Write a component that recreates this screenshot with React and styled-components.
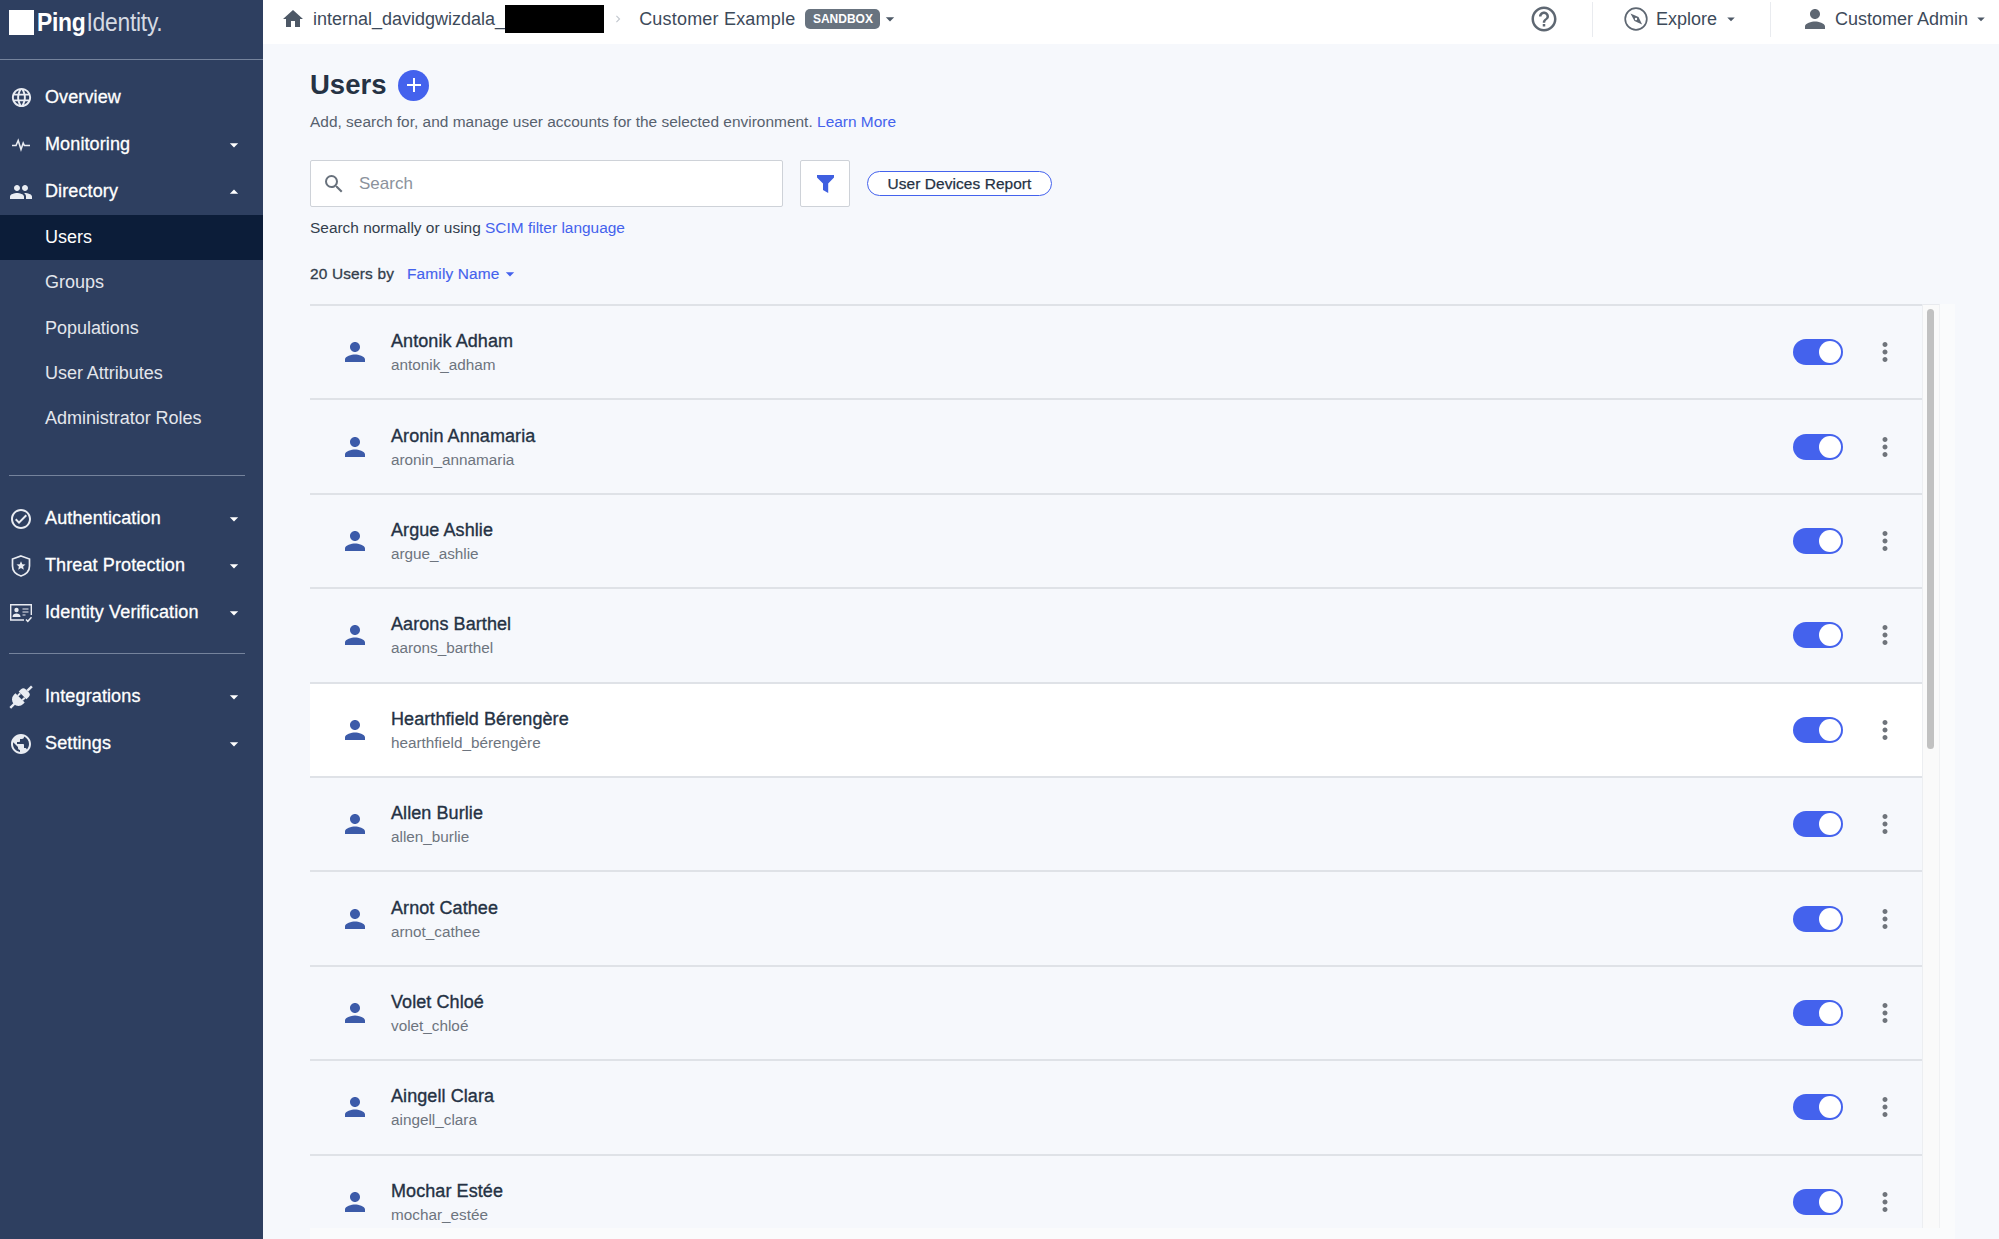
import React from 'react';
import styled, { createGlobalStyle } from 'styled-components';
import {
  MdHome, MdPerson, MdSearch, MdPeople, MdLanguage, MdPublic, MdOutlineCheckCircle,
  MdArrowDropDown, MdArrowDropUp, MdMoreVert, MdHelpOutline, MdChevronRight, MdAdd,
} from 'react-icons/md';

const GlobalStyle = createGlobalStyle`
  html, body {
    margin: 0;
    height: 100%;
    overflow: hidden;
    background: #f6f8fc;
    font-family: "Liberation Sans", Arial, sans-serif;
  }
  #root {
    height: 100%;
  }
`;

const Shell = styled.div`
  display: flex;
  height: 1239px;
  overflow: hidden;
`;

const Sidebar = styled.aside`
  width: 263px;
  flex-shrink: 0;
  background: #2e3f60;
  color: #fff;
`;

const LogoBar = styled.div`
  height: 60px;
  box-sizing: border-box;
  padding: 10px 0 0 9px;
  border-bottom: 1px solid #75839c;
  display: flex;
  align-items: flex-start;
`;

const LogoSquare = styled.div`
  width: 25px;
  height: 25px;
  background: #fff;
  margin-right: 3px;
`;

const LogoText = styled.div`
  font-size: 26px;
  line-height: 25px;
  letter-spacing: -0.3px;
  color: #d5dae3;
  white-space: nowrap;
  transform: scaleX(0.88);
  transform-origin: left center;

  b {
    color: #fff;
    margin-right: 1px;
  }
`;

const Nav = styled.nav`
  padding-top: 14px;
`;

const NavItem = styled.div`
  height: 47px;
  display: flex;
  align-items: center;
  padding: 0 19px 0 9px;
  font-size: 18px;
  letter-spacing: 0.12px;
  -webkit-text-stroke: 0.3px #fff;
  color: #fff;
`;

const NavIcon = styled.span`
  width: 24px;
  height: 24px;
  margin-right: 12px;
  display: flex;
  align-items: center;
  justify-content: center;
  color: #e9ecf2;
`;

const NavLabel = styled.span`
  flex: 1;
`;

const SubItem = styled.div`
  height: 45.25px;
  display: flex;
  align-items: center;
  padding-left: 45px;
  font-size: 18px;
  letter-spacing: -0.03px;
  color: ${(p) => (p.$active ? '#fff' : '#e3e6ec')};
  background: ${(p) => (p.$active ? '#0c1d39' : 'transparent')};
`;

const NavDivider = styled.hr`
  border: 0;
  height: 1px;
  background: #75839c;
  margin: ${(p) => p.$margin};
  width: 236px;
`;

const Main = styled.div`
  flex: 1;
  min-width: 0;
  display: flex;
  flex-direction: column;
`;

const TopBar = styled.header`
  height: 44px;
  box-sizing: border-box;
  padding-bottom: 6px;
  flex-shrink: 0;
  background: #fff;
  display: flex;
  align-items: center;
  justify-content: space-between;
  font-size: 18px;
  color: #3d4a5a;
`;

const Crumbs = styled.div`
  display: flex;
  align-items: center;
  padding-left: 18px;
`;

const HomeIcon = styled(MdHome)`
  margin-right: 8px;
  color: #4d5866;
`;

const Redacted = styled.span`
  width: 99px;
  height: 28px;
  background: #000;
`;

const CrumbArrow = styled(MdChevronRight)`
  color: #c3c8cf;
  margin: 0 14px 0 7px;
`;

const EnvName = styled.span`
  letter-spacing: 0.2px;
`;

const Badge = styled.span`
  margin-left: 10px;
  height: 20px;
  width: 75px;
  border-radius: 5px;
  background: #68737f;
  color: #fff;
  font-size: 12px;
  font-weight: bold;
  display: flex;
  align-items: center;
  justify-content: center;
`;

const TopActions = styled.div`
  display: flex;
  align-items: center;
`;

const TopSection = styled.div`
  height: 35px;
  display: flex;
  align-items: center;
  padding: ${(p) => p.$padding};
  border-left: ${(p) => (p.$divided ? '1px solid #e9ebef' : '0')};
  color: #5e6772;
`;

const TopText = styled.span`
  color: #3d4a5a;
  margin-left: ${(p) => p.$gap}px;
`;

const TopCaret = styled(MdArrowDropDown)`
  color: #4d5866;
  margin-left: ${(p) => p.$gap}px;
`;

const Content = styled.div`
  flex: 1;
  min-height: 0;
  padding: 25px 44px 0 47px;
  display: flex;
  flex-direction: column;
`;

const TitleRow = styled.div`
  display: flex;
  align-items: center;
  height: 32px;
`;

const Title = styled.h1`
  margin: 0;
  font-size: 27.5px;
  font-weight: bold;
  color: #253244;
`;

const AddButton = styled.span`
  width: 31px;
  height: 31px;
  margin-left: 12px;
  border-radius: 50%;
  background: #4462ed;
  color: #fff;
  display: flex;
  align-items: center;
  justify-content: center;
`;

const Description = styled.p`
  margin: 12px 0 0;
  height: 18px;
  line-height: 18px;
  font-size: 15.45px;
  letter-spacing: 0.01px;
  color: #57616e;
`;

const TextLink = styled.a`
  color: #4462ed;
`;

const SearchRow = styled.div`
  display: flex;
  align-items: center;
  margin-top: 29px;
`;

const SearchBox = styled.div`
  width: 473px;
  height: 47px;
  box-sizing: border-box;
  border: 1px solid #ced2d8;
  border-radius: 2px;
  background: #fff;
  display: flex;
  align-items: center;
  padding-left: 11px;
  font-size: 17px;
  color: #8b929c;
`;

const SearchIcon = styled(MdSearch)`
  margin-right: 13px;
  color: #68717c;
`;

const FilterButton = styled.div`
  width: 50px;
  height: 47px;
  box-sizing: border-box;
  margin-left: 17px;
  border: 1px solid #ced2d8;
  border-radius: 2px;
  background: #fff;
  display: flex;
  align-items: center;
  justify-content: center;
  color: #3f5fe0;
`;

const PillButton = styled.div`
  width: 185px;
  height: 25px;
  box-sizing: border-box;
  margin-left: 17px;
  border: 1.5px solid #4462ed;
  border-radius: 13px;
  background: #fff;
  display: flex;
  align-items: center;
  justify-content: center;
  font-size: 15.45px;
  letter-spacing: 0.08px;
  -webkit-text-stroke: 0.25px #253244;
  color: #253244;
`;

const Hint = styled.div`
  margin-top: 12px;
  height: 18px;
  line-height: 18px;
  font-size: 15.45px;
  color: #333e4c;
`;

const CountRow = styled.div`
  margin-top: 28px;
  height: 18px;
  display: flex;
  align-items: center;
  font-size: 15.45px;
  letter-spacing: 0.15px;
  -webkit-text-stroke: 0.3px #333e4c;
  color: #333e4c;
`;

const SortLink = styled.span`
  margin-left: 13px;
  display: flex;
  align-items: center;
  color: #4462ed;
  -webkit-text-stroke: 0.15px #4462ed;
`;

const ListFrame = styled.div`
  margin-top: 21px;
  width: 1645px;
  flex: 1;
  min-height: 0;
  box-sizing: border-box;
  padding: 0 15px 11px 0;
  background: #fafbfc;
  display: flex;
`;

const UserList = styled.div`
  flex: 1;
  min-width: 0;
  overflow: hidden;
  background: #f6f8fc;
  border-top: 2px solid #dfe2e7;
`;

const ScrollTrack = styled.div`
  width: 18px;
  flex-shrink: 0;
  box-sizing: border-box;
  padding: 4px 5px 0 4px;
  background: #fafafa;
  border-top: 1px solid #e8eaee;
  border-left: 1px solid #eceef1;
  border-right: 1px solid #f0f1f3;
`;

const ScrollThumb = styled.div`
  height: 440px;
  border-radius: 5px;
  background: #c1c1c1;
`;

const Row = styled.div`
  height: 94.4px;
  box-sizing: border-box;
  display: flex;
  align-items: center;
  padding: 0 22px 0 30px;
  border-bottom: 2px solid #dfe2e7;
  background: ${(p) => (p.$highlight ? '#fff' : 'transparent')};
`;

const UserIcon = styled(MdPerson)`
  color: #3c5ba9;
  flex-shrink: 0;
`;

const UserText = styled.div`
  flex: 1;
  margin-left: 21px;
`;

const UserName = styled.div`
  font-size: 18px;
  line-height: 22px;
  letter-spacing: 0.08px;
  -webkit-text-stroke: 0.35px #253244;
  color: #253244;
`;

const UserLogin = styled.div`
  margin-top: 4px;
  font-size: 15.3px;
  line-height: 18px;
  color: #6d747e;
`;

const Toggle = styled.span`
  width: 50px;
  height: 26px;
  box-sizing: border-box;
  border-radius: 13px;
  background: #4462ed;
  padding: 2px;
  display: flex;
  justify-content: flex-end;
  margin-right: 27px;

  &::after {
    content: '';
    width: 22px;
    height: 22px;
    border-radius: 50%;
    background: #fff;
  }
`;

const Kebab = styled(MdMoreVert)`
  color: #6f747b;
`;

function PulseIcon() {
  return (
    <svg width="20" height="20" viewBox="0 0 20 20" fill="none" stroke="currentColor" strokeWidth="1.6">
      <path d="M1 10.5h4l2.2-5 2.8 9 2.2-6.5 1.2 2.5H19" />
    </svg>
  );
}

function ShieldIcon() {
  return (
    <svg width="22" height="24" viewBox="0 0 22 24" fill="none" stroke="currentColor" strokeWidth="1.7">
      <path d="M11 2l8.5 3v7c0 4.8-3.6 8.4-8.5 10-4.9-1.6-8.5-5.2-8.5-10V5z" />
      <path fill="currentColor" stroke="none" d="M11 7.2l1.3 3 3.2.3-2.4 2.1.7 3.2-2.8-1.7-2.8 1.7.7-3.2-2.4-2.1 3.2-.3z" />
    </svg>
  );
}

function IdCardIcon() {
  return (
    <svg width="24" height="20" viewBox="0 0 24 20" fill="none" stroke="currentColor" strokeWidth="1.4">
      <path d="M15 17H1.7V1.7h20.6V12" />
      <circle cx="7.5" cy="7" r="2.2" fill="currentColor" stroke="none" />
      <path fill="currentColor" stroke="none" d="M3.5 14c0-2.4 2-3.4 4-3.4s4 1 4 3.4z" />
      <path d="M13.5 6h6M13.5 9h6M13.5 12h3" strokeWidth="1.2" />
      <path d="M17 16.5l1.8 1.8 3.7-4" strokeWidth="1.5" />
    </svg>
  );
}

function PlugIcon() {
  return (
    <svg width="24" height="24" viewBox="0 0 22 22" fill="currentColor">
      <g transform="rotate(45 11 11)">
        <rect x="10" y="-3" width="2.2" height="6" />
        <path d="M6 9V6a3 3 0 0 1 3-3h4a3 3 0 0 1 3 3v3z" />
        <rect x="7.2" y="9" width="1.8" height="3.4" />
        <rect x="13" y="9" width="1.8" height="3.4" />
        <path d="M5 12.2h12v2a6 6 0 0 1-12 0z" />
        <rect x="10" y="19" width="2.2" height="6" />
      </g>
    </svg>
  );
}

function CompassIcon() {
  return (
    <svg width="24" height="24" viewBox="0 0 24 24" fill="none" stroke="currentColor" strokeWidth="1.7">
      <circle cx="12" cy="12" r="10.8" />
      <path fill="currentColor" stroke="none" d="M6.5 6.5l8 3.4 3.6 7.6-7.6-3.6z" />
      <circle cx="12" cy="12" r="1.2" fill="#fff" stroke="none" />
    </svg>
  );
}

function FunnelIcon() {
  return (
    <svg width="17" height="18" viewBox="0 0 17 18" fill="currentColor">
      <path d="M0 0h17v2.4l-5.8 6.2V18l-5.2-3V8.6L0 2.4z" />
    </svg>
  );
}

const mainNav = [
  { label: 'Overview', icon: <MdLanguage size={23} /> },
  { label: 'Monitoring', icon: <PulseIcon />, caret: 'down' },
  { label: 'Directory', icon: <MdPeople size={24} />, caret: 'up' },
];

const subNav = ['Users', 'Groups', 'Populations', 'User Attributes', 'Administrator Roles'];

const securityNav = [
  { label: 'Authentication', icon: <MdOutlineCheckCircle size={24} />, caret: 'down' },
  { label: 'Threat Protection', icon: <ShieldIcon />, caret: 'down' },
  { label: 'Identity Verification', icon: <IdCardIcon />, caret: 'down' },
];

const systemNav = [
  { label: 'Integrations', icon: <PlugIcon />, caret: 'down' },
  { label: 'Settings', icon: <MdPublic size={24} />, caret: 'down' },
];

const users = [
  ['Antonik Adham', 'antonik_adham'],
  ['Aronin Annamaria', 'aronin_annamaria'],
  ['Argue Ashlie', 'argue_ashlie'],
  ['Aarons Barthel', 'aarons_barthel'],
  ['Hearthfield Bérengère', 'hearthfield_bérengère'],
  ['Allen Burlie', 'allen_burlie'],
  ['Arnot Cathee', 'arnot_cathee'],
  ['Volet Chloé', 'volet_chloé'],
  ['Aingell Clara', 'aingell_clara'],
  ['Mochar Estée', 'mochar_estée'],
];

function NavEntry({ item }) {
  return (
    <NavItem>
      <NavIcon>{item.icon}</NavIcon>
      <NavLabel>{item.label}</NavLabel>
      {item.caret === 'down' && <MdArrowDropDown size={20} />}
      {item.caret === 'up' && <MdArrowDropUp size={20} />}
    </NavItem>
  );
}

function App() {
  return (
    <Shell>
      <GlobalStyle />
      <Sidebar>
        <LogoBar>
          <LogoSquare />
          <LogoText><b>Ping</b>Identity.</LogoText>
        </LogoBar>
        <Nav>
          {mainNav.map((item) => <NavEntry key={item.label} item={item} />)}
          {subNav.map((label, i) => (
            <SubItem key={label} $active={i === 0}>{label}</SubItem>
          ))}
          <NavDivider $margin="34px 0 19px 9px" />
          {securityNav.map((item) => <NavEntry key={item.label} item={item} />)}
          <NavDivider $margin="17px 0 19px 9px" />
          {systemNav.map((item) => <NavEntry key={item.label} item={item} />)}
        </Nav>
      </Sidebar>

      <Main>
        <TopBar>
          <Crumbs>
            <HomeIcon size={24} />
            <span>internal_davidgwizdala_</span>
            <Redacted />
            <CrumbArrow size={14} />
            <EnvName>Customer Example</EnvName>
            <Badge>SANDBOX</Badge>
            <MdArrowDropDown size={20} color="#4d5866" />
          </Crumbs>
          <TopActions>
            <TopSection $padding="0 33px 0 0"><MdHelpOutline size={30} /></TopSection>
            <TopSection $divided $padding="0 30px 0 31px">
              <CompassIcon />
              <TopText $gap={8}>Explore</TopText>
              <TopCaret size={18} $gap={5} />
            </TopSection>
            <TopSection $divided $padding="0 9px 0 29px">
              <MdPerson size={30} />
              <TopText $gap={5}>Customer Admin</TopText>
              <TopCaret size={18} $gap={4} />
            </TopSection>
          </TopActions>
        </TopBar>

        <Content>
          <TitleRow>
            <Title>Users</Title>
            <AddButton><MdAdd size={24} /></AddButton>
          </TitleRow>
          <Description>
            Add, search for, and manage user accounts for the selected environment. <TextLink>Learn More</TextLink>
          </Description>
          <SearchRow>
            <SearchBox>
              <SearchIcon size={24} />
              Search
            </SearchBox>
            <FilterButton><FunnelIcon /></FilterButton>
            <PillButton>User Devices Report</PillButton>
          </SearchRow>
          <Hint>Search normally or using <TextLink>SCIM filter language</TextLink></Hint>
          <CountRow>
            20 Users by
            <SortLink>Family Name <MdArrowDropDown size={20} /></SortLink>
          </CountRow>
          <ListFrame>
            <UserList>
              {users.map(([name, login], i) => (
                <Row key={login} $highlight={i === 4}>
                  <UserIcon size={30} />
                  <UserText>
                    <UserName>{name}</UserName>
                    <UserLogin>{login}</UserLogin>
                  </UserText>
                  <Toggle />
                  <Kebab size={30} />
                </Row>
              ))}
            </UserList>
            <ScrollTrack><ScrollThumb /></ScrollTrack>
          </ListFrame>
        </Content>
      </Main>
    </Shell>
  );
}

export default App;
